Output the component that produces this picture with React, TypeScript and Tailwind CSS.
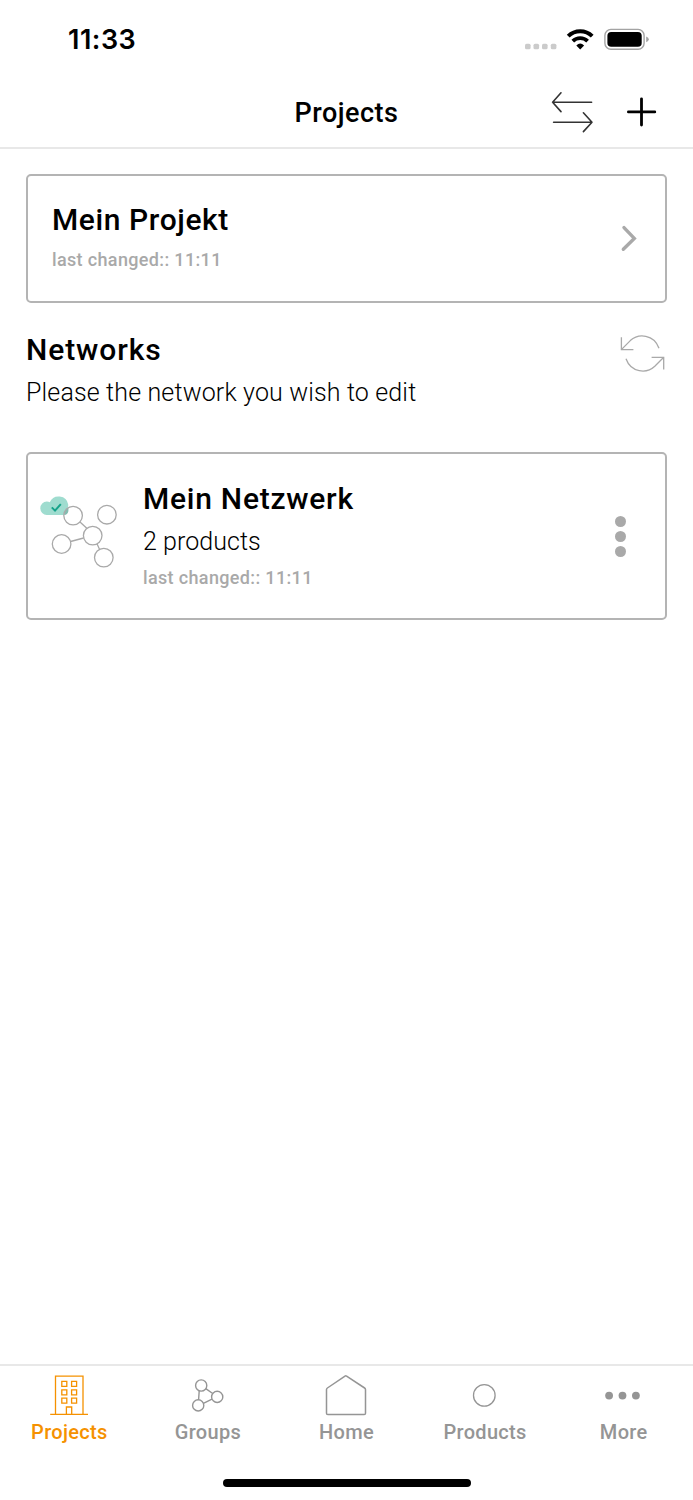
import type { ReactNode } from 'react';

const StatusBar = () => (
  <div className="h-[79px] flex items-center pl-[68px] pr-[44px]">
    <span className="font-[Inter,sans-serif] text-[27px] font-semibold leading-none tracking-[0.5px]">11:33</span>
    <svg className="ml-auto" width="126" height="30" viewBox="523 25 126 30" fill="none">
      {/* Signal */}
      <g fill="#cbcbcb">
        <rect x="525" y="43.7" width="5.6" height="5.6" rx="1.6" />
        <rect x="533.5" y="43.7" width="5.6" height="5.6" rx="1.6" />
        <rect x="542" y="43.7" width="5.6" height="5.6" rx="1.6" />
        <rect x="550.8" y="43.7" width="5.6" height="5.6" rx="1.6" />
      </g>
      {/* Wifi */}
      <path d="M568.2 36.2A17 17 0 0 1 592.2 36.2" stroke="#000" strokeWidth="3.9" />
      <path d="M572.8 41.1A10.6 10.6 0 0 1 587.6 41.1" stroke="#000" strokeWidth="3.8" />
      <path d="M580.2 49.4L576.3 45.4Q580.2 41.4 584.1 45.4Z" fill="#000" />
      {/* Battery */}
      <rect x="604.9" y="29.4" width="39.2" height="19.8" rx="6" stroke="#a3a3a3" strokeWidth="1.4" />
      <rect x="607.4" y="31.9" width="34.3" height="14.8" rx="3.8" fill="#000" />
      <path d="M646.2 36.4Q648.8 37.2 648.8 39.3Q648.8 41.4 646.2 42.2Z" fill="#a3a3a3" />
    </svg>
  </div>
);

const Header = () => (
  <header className="relative h-[70px] flex items-center justify-center border-b-2 border-[#e8e8e8]">
    <h1 className="text-[27px] font-medium leading-[30px] tracking-[0.5px] pb-px">Projects</h1>
    <div className="absolute right-[36px] top-[11px]">
      <svg width="107" height="44" viewBox="550 90 107 44" fill="none" strokeLinecap="round" strokeLinejoin="round">
        <path d="M591.6 102.2H552.6M561 92.8L552.6 102.2L561 111.6M553.6 122.2H592M583.4 112.8L592 122.2L583.4 131.6" stroke="#333" strokeWidth="1.6" />
        <path d="M641.5 98.8V125M628.4 111.9H654.8" stroke="#000" strokeWidth="2.8" />
      </svg>
    </div>
  </header>
);

const CloudNetworkIcon = () => (
  <svg width="90" height="84" viewBox="36 490 90 84" fill="none">
    <path d="M46.8 515a6.4 6.6 0 0 1 0-13.4q1.8 0 3 .6A9.7 9.7 0 0 1 68.2 504.5Q68.3 506 68 507.3Q66 509 65 511.5Q64.2 513.2 64.3 515Z" fill="#9fdccf" />
    <path d="M68 507.3Q66 509 65 511.5Q64.2 513.2 64.3 515Q67.5 514.6 68.3 511.5Q68.7 509 68 507.3Z" fill="#83bcb0" />
    <path d="M51.8 507.4L55 510.6L60.8 504.2" stroke="#16a38a" strokeWidth="2" />
    <g stroke="#a9a9a9" strokeWidth="1.3">
      <circle cx="73.1" cy="515.6" r="9.3" />
      <circle cx="106.9" cy="514.7" r="9.3" />
      <circle cx="92.7" cy="535.6" r="9.3" />
      <circle cx="61.6" cy="544" r="9.3" />
      <circle cx="103.8" cy="557.6" r="9.3" />
      <path d="M80 521.9L86.8 528.2M70.6 541.5L83.6 538M97 543.8L99.6 549.4" />
    </g>
  </svg>
);

const RefreshIcon = () => (
  <svg width="46" height="38" viewBox="620 335 46 38" fill="none" stroke="#a9a9a9" strokeWidth="1.3">
    <path d="M621.4 337.3V349.6H633.4M621.6 349.4L630.3 340.6C638.5 333 654 334.2 659 348.2" />
    <path d="M651.6 357.3H663.7V369.5M663.5 357.5L654.8 366.2C646.5 374 631 372.7 626 358.8" />
  </svg>
);

const BuildingIcon = () => (
  <svg width="40" height="42" viewBox="49 1374 40 42" fill="none" stroke="currentColor" strokeWidth="1.3">
    <path d="M50.2 1414.4H88M55.5 1414V1376.1H83V1414M66.4 1414V1407H71.7V1414" />
    <path d="M61.8 1381.4h5v5h-5zM71.6 1381.4h5v5h-5zM61.8 1389.8h5v5h-5zM71.6 1389.8h5v5h-5zM61.8 1398.2h5v5h-5zM71.6 1398.2h5v5h-5z" />
  </svg>
);

const GroupsIcon = () => (
  <svg width="40" height="42" viewBox="188 1374 40 42" fill="none" stroke="currentColor" strokeWidth="1.4">
    <circle cx="201.2" cy="1385.5" r="5.6" />
    <circle cx="217.2" cy="1396.9" r="5.6" />
    <circle cx="198.2" cy="1405.4" r="5.6" />
    <path d="M199.2 1391L198.6 1399.8M205.8 1388.6L212.7 1393.5M203.4 1403.3L212 1399.2" />
  </svg>
);

const HomeIcon = () => (
  <svg width="44" height="42" viewBox="324.4 1374 44 42" fill="none" stroke="currentColor" strokeWidth="1.5" strokeLinejoin="round">
    <path d="M345.4 1376.1Q346.2 1375.6 347 1376.1L365 1388Q365.9 1388.6 365.9 1389.6V1413.3Q365.9 1414.6 364.6 1414.6H328.2Q326.9 1414.6 326.9 1413.3V1389.6Q326.9 1388.6 327.8 1388Z" />
  </svg>
);

const ProductsIcon = () => (
  <svg width="40" height="42" viewBox="0 0 40 42" fill="none" stroke="currentColor" strokeWidth="1.3">
    <circle cx="19.3" cy="21.4" r="10.8" />
  </svg>
);

const MoreIcon = () => (
  <svg width="40" height="42" viewBox="0 0 40 42" fill="currentColor">
    <circle cx="5.1" cy="21.6" r="3.9" />
    <circle cx="18.5" cy="21.6" r="3.9" />
    <circle cx="31.9" cy="21.6" r="3.9" />
  </svg>
);

const Tab = ({ icon, label, active }: { icon: ReactNode; label: string; active?: boolean }) => (
  <a href="#" className={`flex-1 flex flex-col items-center ${active ? 'text-[#f59100]' : 'text-[#959595]'}`}>
    {icon}
    <span className="mt-[4px] text-[20px] font-medium leading-[24px] tracking-[0.3px]">{label}</span>
  </a>
);

export default function App() {
  return (
    <div className="w-full h-[1500px] flex flex-col bg-white text-black font-[Roboto,sans-serif]">
      <StatusBar />
      <Header />

      <main className="flex-1 px-[26px] pt-[25px]">
        {/* Project */}
        <section className="h-[129px] flex items-center justify-between rounded-[5px] border-2 border-[#b4b4b4] pl-[24px] pr-[27px]">
          <div className="pt-[2px]">
            <h2 className="text-[30px] font-medium leading-[40px] tracking-[0.6px]">Mein Projekt</h2>
            <p className="text-[18px] font-medium leading-[40px] tracking-[0.35px] text-[#a9a9a9]">last changed:: 11:11</p>
          </div>
          <svg width="18" height="28" viewBox="620 225 18 28" fill="none" stroke="#a9a9a9" strokeWidth="3.4" strokeLinecap="round">
            <path d="M624 227.6L634.3 238.4L623.3 249.3" />
          </svg>
        </section>

        {/* Networks */}
        <section className="mt-[25px] flex justify-between pr-px">
          <div>
            <h2 className="text-[30px] font-medium leading-[44px] tracking-[0.9px]">Networks</h2>
            <p className="pt-px text-[25px] font-light leading-[39px] tracking-[0.15px] whitespace-nowrap">Please the network you wish to edit</p>
          </div>
          <div className="pt-[7px]">
            <RefreshIcon />
          </div>
        </section>

        <section className="mt-[40px] h-[168px] flex items-center rounded-[5px] border-2 border-[#b4b4b4] pl-[8px] pr-[39px]">
          <div className="pb-[8px]">
            <CloudNetworkIcon />
          </div>
          <div className="ml-[17px] pb-[2px]">
            <h3 className="text-[30px] font-medium leading-[42px] tracking-[0.75px]">Mein Netzwerk</h3>
            <p className="pt-px text-[25px] font-light leading-[42px] tracking-[0.05px]">2 products</p>
            <p className="text-[18px] font-medium leading-[29px] tracking-[0.35px] text-[#a9a9a9]">last changed:: 11:11</p>
          </div>
          <div className="ml-auto flex flex-col gap-[4px]">
            <span className="size-[11px] rounded-full bg-[#a9a9a9]" />
            <span className="size-[11px] rounded-full bg-[#a9a9a9]" />
            <span className="size-[11px] rounded-full bg-[#a9a9a9]" />
          </div>
        </section>
      </main>

      {/* Tab bar */}
      <nav className="h-[136px] border-t-2 border-[#e8e8e8] flex flex-col">
        <div className="flex pt-[8px]">
          <Tab icon={<BuildingIcon />} label="Projects" active />
          <Tab icon={<GroupsIcon />} label="Groups" />
          <Tab icon={<HomeIcon />} label="Home" />
          <Tab icon={<ProductsIcon />} label="Products" />
          <Tab icon={<MoreIcon />} label="More" />
        </div>
        <div className="mt-auto mb-[13px] mx-auto w-[248px] h-[8px] rounded-full bg-black" />
      </nav>
    </div>
  );
}
